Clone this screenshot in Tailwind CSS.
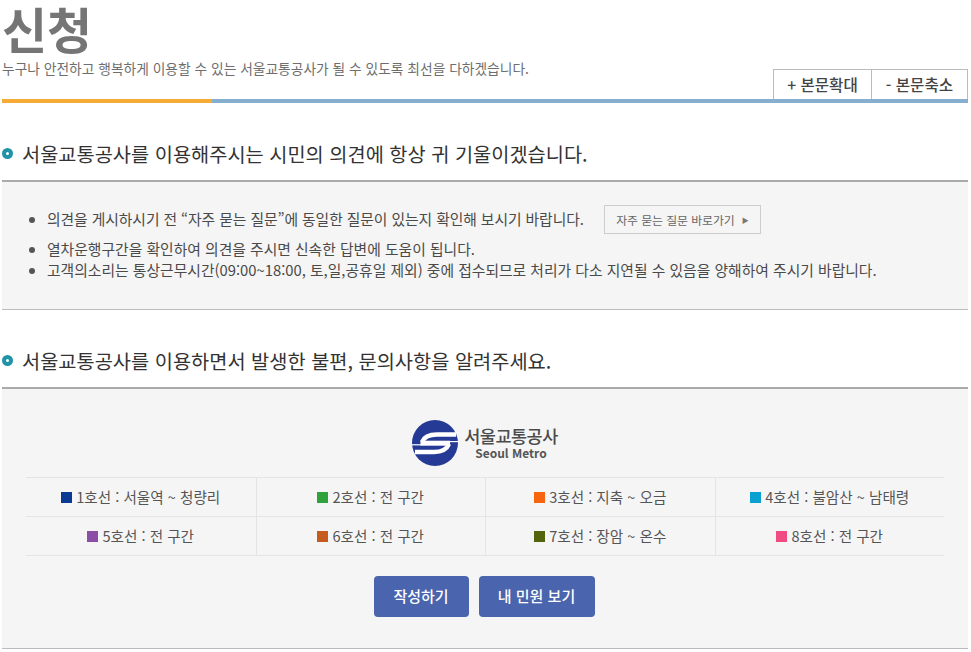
<!DOCTYPE html>
<html lang="ko">
<head>
<meta charset="utf-8">
<script src="https://cdn.jsdelivr.net/npm/@tailwindcss/browser@4"></script>
</head>
<body class="bg-white font-['Noto_Sans_CJK_KR','Noto_Sans',sans-serif] text-[#555] overflow-hidden">
<div class="w-[966px] ml-[2px] h-[652px]">
  <header class="relative h-[103px] border-b-[4px] border-[#86aecf]">
    <h1 class="text-[49px] leading-[55px] font-bold text-[#757575] h-[58px]">신청</h1>
    <p class="text-[13.75px] leading-[20px] text-[#6e6e6e]">누구나 안전하고 행복하게 이용할 수 있는 서울교통공사가 될 수 있도록 최선을 다하겠습니다.</p>
    <div class="absolute left-0 bottom-[-4px] w-[210px] h-[4px] bg-[#f5ab35]"></div>
    <div class="absolute right-0 top-[69px] bottom-0 flex border border-b-0 border-[#bbb] bg-white text-[15.6px] font-medium text-[#444]">
      <span class="w-[98px] flex items-center justify-center border-r border-[#bbb]">+ 본문확대</span>
      <span class="w-[95px] flex items-center justify-center">- 본문축소</span>
    </div>
  </header>

  <h2 class="mt-[30px] h-[47px] pb-[6px] flex items-center gap-[9px] text-[19.75px] font-normal text-[#333]">
    <span class="w-[11px] h-[11px] rounded-full border-[4px] border-[#1f93a8] bg-white"></span>
    서울교통공사를 이용해주시는 시민의 의견에 항상 귀 기울이겠습니다.
  </h2>

  <section class="h-[130px] bg-[#f5f5f5] border-t-2 border-b border-t-[#aaa] border-b-[#bbb] pt-[22px] text-[14.8px] text-[#4a4a4a]">
    <ul class="list-disc pl-[45px] marker:text-[#555]">
      <li class="leading-[30px] h-[34px] tracking-[-0.07px]">의견을 게시하시기 전 “자주 묻는 질문”에 동일한 질문이 있는지 확인해 보시기 바랍니다.
        <span class="inline-flex items-center justify-center ml-[16px] mb-[2px] w-[157px] h-[29px] border border-[#ccc] text-[11.9px] text-[#666] align-middle gap-[7px]">자주 묻는 질문 바로가기 <span class="text-[7px] text-[#777]">▶</span></span>
      </li>
      <li class="leading-[21px]">열차운행구간을 확인하여 의견을 주시면 신속한 답변에 도움이 됩니다.</li>
      <li class="leading-[21px]">고객의소리는 통상근무시간(09:00~18:00, 토,일,공휴일 제외) 중에 접수되므로 처리가 다소 지연될 수 있음을 양해하여 주시기 바랍니다.</li>
    </ul>
  </section>

  <h2 class="mt-[31px] h-[46px] pb-[7px] flex items-center gap-[9px] text-[19.75px] font-normal text-[#333]">
    <span class="w-[11px] h-[11px] rounded-full border-[4px] border-[#1f93a8] bg-white"></span>
    서울교통공사를 이용하면서 발생한 불편, 문의사항을 알려주세요.
  </h2>

  <section class="h-[262px] bg-[#f5f5f5] border-t-2 border-b border-t-[#aaa] border-b-[#bbb] px-[24px] pt-[31px]">
    <div class="flex items-center justify-center gap-[6px] h-[46px]">
      <svg width="46" height="46" viewBox="0 0 46 46" fill="none" stroke="#fff">
        <circle cx="23" cy="23" r="23" fill="#253a94" stroke="none"/>
        <path d="M44 14.5 H25 C17 14.5 12 17 10 22" stroke-width="4.4"/>
        <path d="M37 24 C35 29 30 32 22 32 H3" stroke-width="4.4"/>
        <path d="M8.5 23.2 H38" stroke-width="5"/>
        <path d="M0 24.8 H10" stroke-width="1.2"/>
        <path d="M36 21.6 H46" stroke-width="1.2"/>
      </svg>
      <div class="flex flex-col items-center">
        <span class="text-[17.5px] leading-[20px] font-medium text-[#4c4c4c] tracking-[-0.5px]">서울교통공사</span>
        <span class="text-[12px] leading-[14px] font-bold text-[#555]">Seoul Metro</span>
      </div>
    </div>

    <div class="mt-[11px] grid grid-cols-4 border-t border-[#e4e4e4] text-[14.6px] text-[#555]">
      <div class="h-[39px] flex items-center justify-center gap-[4px] border-b border-[#e4e4e4]"><span class="w-[11px] h-[11px] bg-[#0a3a94]"></span>1호선 : 서울역 ~ 청량리</div>
      <div class="h-[39px] flex items-center justify-center gap-[4px] border-b border-l border-[#e4e4e4]"><span class="w-[11px] h-[11px] bg-[#2fa23c]"></span>2호선 : 전 구간</div>
      <div class="h-[39px] flex items-center justify-center gap-[4px] border-b border-l border-[#e4e4e4]"><span class="w-[11px] h-[11px] bg-[#f66410]"></span>3호선 : 지축 ~ 오금</div>
      <div class="h-[39px] flex items-center justify-center gap-[4px] border-b border-l border-[#e4e4e4]"><span class="w-[11px] h-[11px] bg-[#0aa0d2]"></span>4호선 : 불암산 ~ 남태령</div>
      <div class="h-[39px] flex items-center justify-center gap-[4px] border-b border-[#e4e4e4]"><span class="w-[11px] h-[11px] bg-[#8a4ea6]"></span>5호선 : 전 구간</div>
      <div class="h-[39px] flex items-center justify-center gap-[4px] border-b border-l border-[#e4e4e4]"><span class="w-[11px] h-[11px] bg-[#c55c1d]"></span>6호선 : 전 구간</div>
      <div class="h-[39px] flex items-center justify-center gap-[4px] border-b border-l border-[#e4e4e4]"><span class="w-[11px] h-[11px] bg-[#54640d]"></span>7호선 : 장암 ~ 온수</div>
      <div class="h-[39px] flex items-center justify-center gap-[4px] border-b border-l border-[#e4e4e4]"><span class="w-[11px] h-[11px] bg-[#f14c82]"></span>8호선 : 전 구간</div>
    </div>

    <div class="mt-[20px] flex justify-center gap-[10px] text-[15px] font-medium text-white pr-[2px]">
      <span class="w-[95px] h-[41px] rounded-[4px] bg-[#4a64ad] flex items-center justify-center">작성하기</span>
      <span class="w-[116px] h-[41px] rounded-[4px] bg-[#4a64ad] flex items-center justify-center">내 민원 보기</span>
    </div>
  </section>
</div>
</body>
</html>
